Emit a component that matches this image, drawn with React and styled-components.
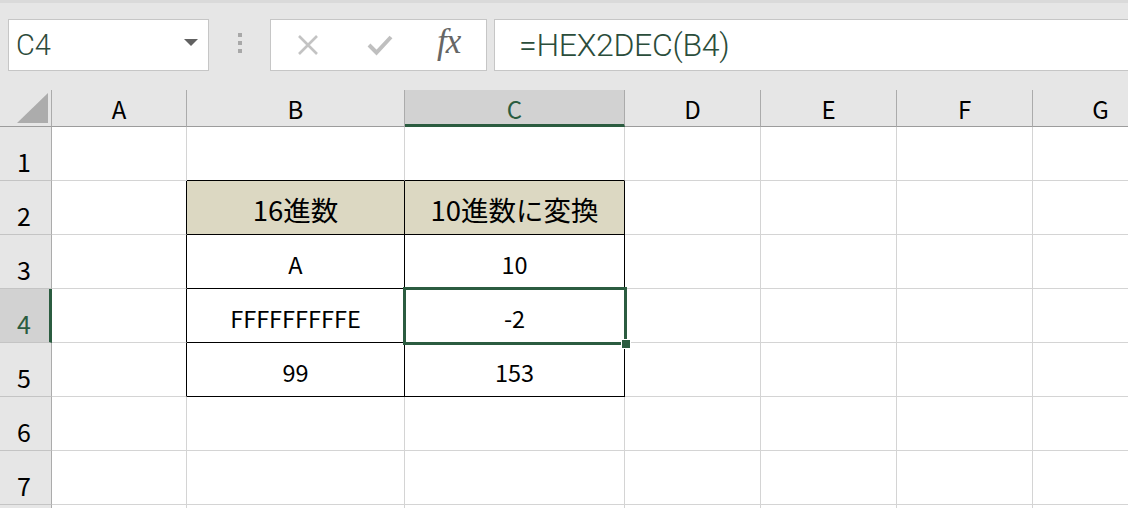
import React from "react";
import styled, { createGlobalStyle } from "styled-components";

const GlobalStyle = createGlobalStyle`
  html, body {
    margin: 0;
    padding: 0;
    background: #e6e6e6;
    overflow: hidden;
  }
`;

const GREEN = "#2b5c40";
const GRID = "#d4d4d4";
const HEAD_LINE = "#ababab";

const columns = [
  { key: "A", width: 135 },
  { key: "B", width: 218 },
  { key: "C", width: 220 },
  { key: "D", width: 136 },
  { key: "E", width: 136 },
  { key: "F", width: 136 },
  { key: "G", width: 136 },
];

// the last row only peeks in at the bottom edge, so it gets no label
const rows = [1, 2, 3, 4, 5, 6, 7, 8];
const visibleRows = 7;

const cells = {
  B2: { text: "16進数", head: true },
  C2: { text: "10進数に変換", head: true },
  B3: { text: "A" },
  C3: { text: "10" },
  B4: { text: "FFFFFFFFFE" },
  C4: { text: "-2" },
  B5: { text: "99" },
  C5: { text: "153" },
};

const selected = { col: "C", row: 4 };

const Window = styled.div`
  width: 1128px;
  height: 508px;
  overflow: hidden;
  font-family: "Noto Sans CJK JP", "Noto Sans", sans-serif;
  border-top: 3px solid #dadada;
  box-sizing: border-box;
`;

const FormulaBar = styled.div`
  display: flex;
  align-items: center;
  height: 87px;
  padding: 14px 0 18px 8px;
  box-sizing: border-box;
`;

const NameBox = styled.div`
  width: 201px;
  height: 52px;
  box-sizing: border-box;
  background: #fff;
  border: 1px solid #c6c6c6;
  display: flex;
  align-items: center;
  justify-content: space-between;
  padding: 0 10px 0 7px;
  color: #2d4a3a;
  font-family: "Roboto", "Liberation Sans", sans-serif;
  font-weight: 300;
  font-size: 29px;
`;

const DropArrow = styled.span`
  width: 0;
  height: 0;
  border-left: 7px solid transparent;
  border-right: 7px solid transparent;
  border-top: 7px solid #616161;
  margin-top: -4px;
`;

const Grip = styled.div`
  width: 61px;
  display: flex;
  flex-direction: column;
  align-items: center;
  gap: 4px;
  margin-top: -4px;

  span {
    width: 4px;
    height: 4px;
    background: #a8a8a8;
  }
`;

const ButtonBox = styled.div`
  width: 217px;
  height: 52px;
  box-sizing: border-box;
  background: #fff;
  border: 1px solid #c6c6c6;
  display: flex;
  align-items: center;
  padding-left: 26px;
`;

const BarButton = styled.span`
  width: ${(p) => p.$w}px;
  display: flex;
  align-items: center;
`;

const Fx = styled.span`
  font-family: "Liberation Serif", serif;
  font-style: italic;
  font-size: 35px;
  color: #666;
  letter-spacing: -1px;
  margin-top: -6px;
`;

const FormulaInput = styled.div`
  flex: 1;
  margin-left: 7px;
  height: 52px;
  box-sizing: border-box;
  background: #fff;
  border: 1px solid #c6c6c6;
  border-right: none;
  display: flex;
  align-items: center;
  padding-left: 24px;
  color: #2b4d3b;
  font-family: "Roboto", "Liberation Sans", sans-serif;
  font-weight: 300;
  font-size: 32px;
  letter-spacing: -0.3px;
`;

const Sheet = styled.div`
  display: grid;
  grid-template-columns: 52px ${columns.map((c) => `${c.width}px`).join(" ")};
  grid-template-rows: 37px repeat(${rows.length}, 54px);
  background: #fff;
`;

const Corner = styled.div`
  background: #e6e6e6;
  border-right: 1px solid ${HEAD_LINE};
  border-bottom: 1px solid #9c9c9c;
  box-sizing: border-box;
  display: flex;
  align-items: flex-end;
  justify-content: flex-end;
  padding: 0 3px 3px 0;

  svg {
    display: block;
  }
`;

const ColHead = styled.div`
  background: ${(p) => (p.$active ? "#d2d2d2" : "#e6e6e6")};
  border-right: 1px solid ${HEAD_LINE};
  border-bottom: ${(p) => (p.$active ? `3px solid ${GREEN}` : "1px solid #9c9c9c")};
  box-sizing: border-box;
  display: flex;
  align-items: center;
  justify-content: center;
  padding-top: ${(p) => (p.$active ? "2px" : "0")};
  color: ${(p) => (p.$active ? GREEN : "#000")};
  font-size: 24px;
`;

const RowHead = styled.div`
  background: ${(p) => (p.$active ? "#d2d2d2" : "#e6e6e6")};
  border-right: ${(p) => (p.$active ? `3px solid ${GREEN}` : `1px solid ${HEAD_LINE}`)};
  border-bottom: 1px solid #c4c4c4;
  box-sizing: border-box;
  display: flex;
  align-items: flex-end;
  padding: 0 0 1px 17px;
  color: ${(p) => (p.$active ? GREEN : "#000")};
  font-size: 25px;
`;

const Cell = styled.div`
  position: relative;
  z-index: ${(p) => (p.$selected ? 2 : "auto")};
  box-sizing: border-box;
  border-right: 1px solid ${(p) => (p.$edgeRight ? "#000" : GRID)};
  border-bottom: 1px solid ${(p) => (p.$edgeBottom ? "#000" : GRID)};
  background: ${(p) => (p.$head ? "#dcd8c2" : "#fff")};
  display: flex;
  align-items: flex-end;
  justify-content: center;
  padding-bottom: ${(p) => (p.$head ? "5px" : "7px")};
  color: #000;
  font-size: ${(p) => (p.$head ? "27.5px" : "23.5px")};
  white-space: nowrap;
`;

const Selection = styled.div`
  position: absolute;
  top: -2px;
  left: -2px;
  right: -3px;
  bottom: -3px;
  border: 3px solid ${GREEN};
  pointer-events: none;
`;

const FillHandle = styled.div`
  position: absolute;
  right: -6px;
  bottom: -6px;
  width: 8px;
  height: 8px;
  background: ${GREEN};
  outline: 1px solid #fff;
`;

function inTable(col, row) {
  return (col === "B" || col === "C") && row >= 2 && row <= 5;
}

const App = () => {
  return (
    <Window>
      <GlobalStyle />
      <FormulaBar>
        <NameBox>
          C4
          <DropArrow />
        </NameBox>
        <Grip>
          <span />
          <span />
          <span />
        </Grip>
        <ButtonBox>
          <BarButton $w={70}>
            <svg width="22" height="20" viewBox="0 0 22 20">
              <path d="M2 1 L20 19 M20 1 L2 19" stroke="#c3c3c3" strokeWidth="2.6" fill="none" />
            </svg>
          </BarButton>
          <BarButton $w={70}>
            <svg width="26" height="22" viewBox="0 0 26 22">
              <path d="M2 11 L9.5 18.5 L24 3" stroke="#bfbfbf" strokeWidth="4" fill="none" />
            </svg>
          </BarButton>
          <BarButton $w={40}>
            <Fx>fx</Fx>
          </BarButton>
        </ButtonBox>
        <FormulaInput>=HEX2DEC(B4)</FormulaInput>
      </FormulaBar>

      <Sheet>
        <Corner>
          <svg width="31" height="30" viewBox="0 0 31 30">
            <polygon points="0,30 31,0 31,30" fill="#acacac" />
          </svg>
        </Corner>
        {columns.map((c) => (
          <ColHead key={c.key} $active={c.key === selected.col}>
            {c.key}
          </ColHead>
        ))}

        {rows.map((r) => (
          <React.Fragment key={r}>
            <RowHead $active={r === selected.row}>{r <= visibleRows ? r : null}</RowHead>
            {columns.map((c, i) => {
              const id = `${c.key}${r}`;
              const data = cells[id];
              const next = columns[i + 1];
              const edgeRight = inTable(c.key, r) || (next && inTable(next.key, r));
              const edgeBottom = inTable(c.key, r) || inTable(c.key, r + 1);
              const isSel = c.key === selected.col && r === selected.row;
              return (
                <Cell
                  key={id}
                  $selected={isSel}
                  $edgeRight={edgeRight}
                  $edgeBottom={edgeBottom}
                  $head={data && data.head}
                >
                  {data && data.text}
                  {isSel && (
                    <Selection>
                      <FillHandle />
                    </Selection>
                  )}
                </Cell>
              );
            })}
          </React.Fragment>
        ))}
      </Sheet>
    </Window>
  );
};

export default App;
